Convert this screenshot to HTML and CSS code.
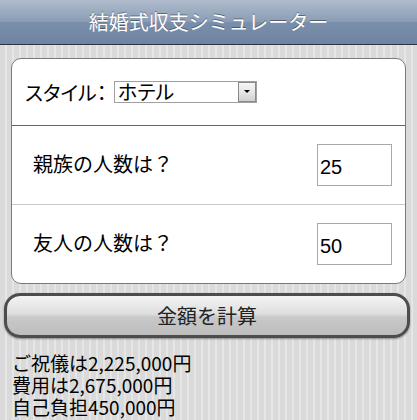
FILE: index.html
```html
<!DOCTYPE html>
<html lang="ja">
<head>
    <meta charset="utf-8">
    <title>結婚式収支シミュレーター</title>
    <link rel="stylesheet" href="styles.css">
</head>
<body>

<div class="toolbar">
    <h1>結婚式収支シミュレーター</h1>
</div>

<form id="simForm" onsubmit="return calc()">
    <ul class="card">
        <li class="row row-style">
            <span class="label">スタイル：</span>
            <div class="select-box">
                <select id="style" name="style">
                    <option value="hotel">ホテル</option>
                    <option value="house">ゲストハウス</option>
                    <option value="restaurant">レストラン</option>
                </select>
                <span class="arrow"></span>
            </div>
        </li>
        <li class="row">
            <span class="label">親族の人数は？</span>
            <input type="text" id="family" name="family" value="25">
        </li>
        <li class="row last">
            <span class="label">友人の人数は？</span>
            <input type="text" id="friends" name="friends" value="50">
        </li>
    </ul>

    <button type="submit" class="btn">金額を計算</button>
</form>

<div class="result">
    <div id="gift">ご祝儀は2,225,000円</div>
    <div id="cost">費用は2,675,000円</div>
    <div id="own">自己負担450,000円</div>
</div>

<script>
    function calc() {
        // ご祝儀と費用をざっくり計算
        const family = parseInt(document.getElementById('family').value) || 0;
        const friends = parseInt(document.getElementById('friends').value) || 0;
        const gift = family * 40000 + friends * 25000 + 225000;
        const cost = (family + friends) * 35000 + 50000;

        document.getElementById('gift').textContent = 'ご祝儀は' + gift.toLocaleString() + '円';
        document.getElementById('cost').textContent = '費用は' + cost.toLocaleString() + '円';
        document.getElementById('own').textContent = '自己負担' + (cost - gift).toLocaleString() + '円';
        return false;
    }
</script>

</body>
</html>
```

FILE: styles.css
```css
body {
    margin: 0;
    font-family: "Noto Sans CJK JP", "Liberation Sans", sans-serif;
    font-size: 20px;
    color: #000;
    background: repeating-linear-gradient(90deg, #dadada 0, #dadada 5px, #e6e6e6 5px, #e6e6e6 7px);
    min-height: 420px;
}

.toolbar {
    height: 44px;
    border-bottom: 1px solid #2d3642;
    background: linear-gradient(#b0bccd, #8a9cb4 50%, #7a8fab 51%, #6d84a2);
    display: flex;
    align-items: center;
    justify-content: center;
}

.toolbar h1 {
    margin: 0;
    font-size: 20px;
    font-weight: normal;
    color: #fff;
    text-shadow: rgba(0, 0, 0, 0.4) 0 -1px 0;
    line-height: 24px;
}

form {
    margin: 0;
}

.card {
    list-style: none;
    margin: 13px 11px 0 11px;
    padding: 0;
    background: #fff;
    border: 1px solid #7a7a7a;
    border-radius: 10px;
}

.row {
    display: flex;
    align-items: center;
    justify-content: space-between;
    height: 78px;
    padding: 0 13px 0 21px;
    border-bottom: 1px solid #c8c8c8;
}

.row .label {
    margin-top: -4px;
}

.row-style {
    height: 66px;
    padding-left: 13px;
    justify-content: flex-start;
    border-bottom-color: #666;
}

.row-style .label {
    margin-top: 0;
    width: 89px;
    font-feature-settings: "palt";
}

.row.last {
    border-bottom: none;
}

.select-box {
    display: flex;
    width: 141px;
    height: 20px;
    border: 1px solid #a0a0a0;
    background: #fff;
}

.select-box select {
    flex: 1;
    appearance: none;
    -webkit-appearance: none;
    border: none;
    outline: none;
    background: transparent;
    font-family: inherit;
    font-size: 20px;
    font-feature-settings: "palt";
    line-height: 20px;
    padding: 0 0 0 3px;
    margin: 0;
    height: 20px;
    color: #000;
}

.arrow {
    width: 16px;
    height: 18px;
    margin: 0;
    border: 1px solid #8a8a8a;
    background: linear-gradient(#f6f6f6, #e2e2e2 60%, #cfcfcf);
    display: flex;
    align-items: center;
    justify-content: center;
}

.arrow::after {
    content: "";
    border-left: 3px solid transparent;
    border-right: 3px solid transparent;
    border-top: 3px solid #000;
    margin-top: -2px;
}

input[type="text"] {
    width: 75px;
    height: 42px;
    box-sizing: border-box;
    border: 1px solid #a8a8a8;
    padding: 4px 0 0 2px;
    font-family: "Liberation Sans", sans-serif;
    font-size: 20px;
    color: #000;
    outline: none;
}

.btn {
    display: block;
    width: 406px;
    height: 45px;
    margin: 9px 0 0 4px;
    border: 3px solid #4d4d4d;
    border-radius: 16px;
    background: linear-gradient(#f4f4f4, #dedede 45%, #c8c8c8 55%, #bdbdbd);
    box-shadow: 0 1px 2px rgba(0, 0, 0, 0.4);
    font-family: inherit;
    font-size: 20px;
    color: #222;
    padding: 0;
    cursor: pointer;
}

.result {
    margin: 14px 0 0 12px;
    font-size: 19px;
    line-height: 22px;
}
```
